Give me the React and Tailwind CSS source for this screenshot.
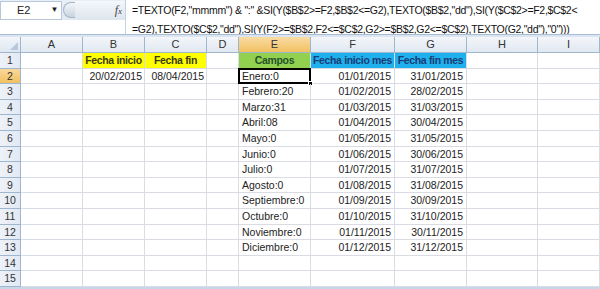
import React from "react";

const cols = ["A", "B", "C", "D", "E", "F", "G", "H", "I"];

const months = [
  ["Enero:0", "01/01/2015", "31/01/2015"],
  ["Febrero:20", "01/02/2015", "28/02/2015"],
  ["Marzo:31", "01/03/2015", "31/03/2015"],
  ["Abril:08", "01/04/2015", "30/04/2015"],
  ["Mayo:0", "01/05/2015", "31/05/2015"],
  ["Junio:0", "01/06/2015", "30/06/2015"],
  ["Julio:0", "01/07/2015", "31/07/2015"],
  ["Agosto:0", "01/08/2015", "31/08/2015"],
  ["Septiembre:0", "01/09/2015", "30/09/2015"],
  ["Octubre:0", "01/10/2015", "31/10/2015"],
  ["Noviembre:0", "01/11/2015", "30/11/2015"],
  ["Diciembre:0", "01/12/2015", "31/12/2015"],
];

function Cell({ children, className = "" }) {
  return (
    <div className={"h-full border-r border-b border-[#d9dde3] overflow-visible whitespace-nowrap flex items-center " + className}>
      {children}
    </div>
  );
}

function Row({ n, cells }) {
  const sel = n === 2;
  return (
    <div className="grid grid-cols-[21px_62px_62px_62px_32px_72px_84px_72px_71px_62px] h-[15.6px]">
      <div className={"h-full border-r border-b border-[#9eb6ce] flex items-center justify-center text-[#333] " + (sel ? "bg-gradient-to-b from-[#f8d89a] to-[#f1c15f]" : "bg-gradient-to-r from-[#eef2f8] to-[#e2e9f3]")}>
        {n}
      </div>
      {cells}
    </div>
  );
}

export default function App() {
  const rows = [];
  for (let n = 1; n <= 15; n++) {
    let c;
    if (n === 1) {
      const h = " justify-center font-bold tracking-[-0.35px] ";
      c = [
        <Cell key="a" />,
        <Cell key="b" className={"bg-[#ffff00] text-[#3a3a14]" + h}>Fecha inicio</Cell>,
        <Cell key="c" className={"bg-[#ffff00] text-[#3a3a14]" + h}>Fecha fin</Cell>,
        <Cell key="d" />,
        <Cell key="e" className={"bg-[#92d050] text-[#24502a]" + h}>Campos</Cell>,
        <Cell key="f" className={"bg-[#1fb0ee] text-[#1b3c74]" + h}>Fecha inicio mes</Cell>,
        <Cell key="g" className={"bg-[#1fb0ee] text-[#1b3c74]" + h}>Fecha fin mes</Cell>,
        <Cell key="h" />,
        <Cell key="i" />,
      ];
    } else if (n <= 13) {
      const m = months[n - 2];
      c = [
        <Cell key="a" />,
        <Cell key="b" className="justify-end pr-[2px]">{n === 2 ? "20/02/2015" : ""}</Cell>,
        <Cell key="c" className="justify-end pr-[2px]">{n === 2 ? "08/04/2015" : ""}</Cell>,
        <Cell key="d" />,
        <div key="e" className="relative h-full border-r border-b border-[#d9dde3] whitespace-nowrap flex items-center pl-[3px]">
          {m[0]}
          {n === 2 && (
            <div className="absolute left-[-1px] top-[-1px] right-[-1px] bottom-[-1px] border-2 border-black">
              <div className="absolute right-[-4px] bottom-[-4px] w-[5px] h-[5px] bg-black border border-white" />
            </div>
          )}
        </div>,
        <Cell key="f" className="justify-end pr-[3px]">{m[1]}</Cell>,
        <Cell key="g" className="justify-end pr-[3px]">{m[2]}</Cell>,
        <Cell key="h" />,
        <Cell key="i" />,
      ];
    } else {
      c = cols.map((k) => <Cell key={k} />);
    }
    rows.push(<Row key={n} n={n} cells={c} />);
  }

  return (
    <div className="w-[600px] h-[289px] overflow-hidden bg-white text-[10.5px] leading-none text-[#222]" style={{ fontFamily: '"Liberation Sans", Arial, sans-serif' }}>
      {/* formula bar */}
      <div className="h-[35px] flex bg-gradient-to-b from-[#e9eff7] to-[#dbe5f1] border-b border-[#a9bcd6]">
        <div className="w-[125px] flex flex-col">
          <div className="h-[20px] flex items-center">
            <div className="w-[62px] h-[19px] bg-white border border-[#b7c7dc] flex items-center">
              <span className="ml-[16px] text-[11px] text-[#222]">E2</span>
              <span className="ml-[20px] text-[8px] text-[#222]">▼</span>
            </div>
            <div className="ml-[1px] w-[12px] h-[16px] rounded-l-full bg-gradient-to-b from-[#f3f6fa] to-[#c9d3df] border border-[#a7b4c4] border-r-0" />
            <div className="flex-1 h-[19px] bg-gradient-to-b from-[#f4f7fb] to-[#dde5ee] flex items-center justify-end pr-[3px]">
              <span className="italic text-[12px] text-[#444]" style={{ fontFamily: '"Liberation Serif", serif' }}>
                f<span className="text-[9px]">x</span>
              </span>
            </div>
          </div>
          <div className="flex-1 bg-white" />
        </div>
        <div className="flex-1 h-full bg-white border-l border-[#c5d2e2] pl-[6px] pt-[5px] text-[10.5px] text-[#111] tracking-[-0.3px] whitespace-nowrap overflow-hidden">
          <div className="leading-[11px]">=TEXTO(F2,"mmmm") &amp; ":" &amp;SI(Y($B$2&gt;=F2,$B$2&lt;=G2),TEXTO($B$2,"dd"),SI(Y($C$2&gt;=F2,$C$2&lt;</div>
          <div className="leading-[11px] mt-[8px]">=G2),TEXTO($C$2,"dd"),SI(Y(F2&gt;=$B$2,F2&lt;=$C$2,G2&gt;=$B$2,G2&lt;=$C$2),TEXTO(G2,"dd"),"0")))</div>
        </div>
      </div>
      <div className="h-[2px] bg-[#dbe5f1]" />
      {/* column headers */}
      <div className="grid grid-cols-[21px_62px_62px_62px_32px_72px_84px_72px_71px_62px] h-[16px] text-[#333] text-[11px]">
        <div className="relative border-r border-b border-[#9eb6ce] bg-gradient-to-b from-[#f1f5fa] to-[#dfe7f1]">
          <div className="absolute right-[2px] bottom-[2px] w-0 h-0 border-l-[8px] border-l-transparent border-b-[8px] border-b-[#b8c8dc]" />
        </div>
        {cols.map((k) => (
          <div key={k} className={"border-r border-b border-[#9eb6ce] flex items-center justify-center " + (k === "E" ? "bg-gradient-to-b from-[#f9dba3] to-[#f1c15f]" : "bg-gradient-to-b from-[#f3f6fa] to-[#e1e8f1]")}>
            {k}
          </div>
        ))}
      </div>
      {rows}
      <div className="h-[3px] bg-[#c8d6ea]" />
    </div>
  );
}
